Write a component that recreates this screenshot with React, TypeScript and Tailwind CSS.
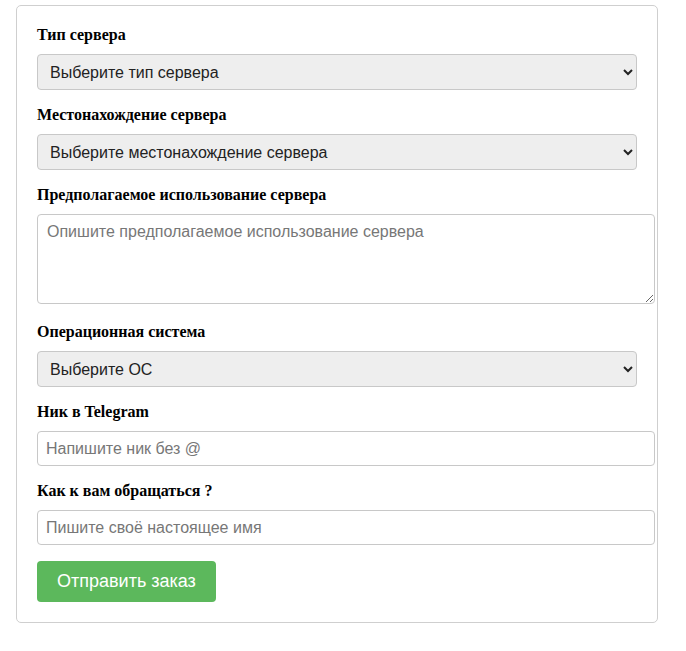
import React from "react";

const labelCls =
  "block text-[16px] leading-[20px] font-bold text-black mb-[9px] [font-family:'Liberation_Serif',serif]";
const selectCls =
  "block w-[600px] h-[36px] pl-[8px] pr-[4px] bg-[#eeeeee] border border-[#c8c8c8] rounded-[4px] text-[16px] text-[#222] [font-family:'Liberation_Sans',Arial,sans-serif]";
const inputCls =
  "block w-[618px] h-[35px] px-[8px] bg-white border border-[#c8c8c8] rounded-[4px] text-[16px] text-[#222] placeholder:text-[#777] [font-family:'Liberation_Sans',Arial,sans-serif] outline-none";

export default function App() {
  return (
    <div className="w-[686px] h-[651px] bg-white pt-[5px] pl-[16px]">
      <div className="w-[642px] border border-[#cfcfcf] rounded-[5px] pt-[19px] pb-[20px] pl-[20px] pr-[20px]">
        <div className="mb-[15px]">
          <label className={labelCls}>Тип сервера</label>
          <select className={selectCls} defaultValue="">
            <option value="">Выберите тип сервера</option>
          </select>
        </div>
        <div className="mb-[15px]">
          <label className={labelCls}>Местонахождение сервера</label>
          <select className={selectCls} defaultValue="">
            <option value="">Выберите местонахождение сервера</option>
          </select>
        </div>
        <div className="mb-[18px]">
          <label className={labelCls}>Предполагаемое использование сервера</label>
          <textarea
            className="block w-[618px] h-[90px] px-[9px] py-[7px] bg-white border border-[#c8c8c8] rounded-[4px] text-[16px] leading-[20px] text-[#222] placeholder:text-[#777] [font-family:'Liberation_Sans',Arial,sans-serif] outline-none resize-y"
            placeholder="Опишите предполагаемое использование сервера"
          />
        </div>
        <div className="mb-[15px]">
          <label className={labelCls}>Операционная система</label>
          <select className={selectCls} defaultValue="">
            <option value="">Выберите ОС</option>
          </select>
        </div>
        <div className="mb-[15px]">
          <label className={labelCls}>Ник в Telegram</label>
          <input className={inputCls} placeholder="Напишите ник без @" />
        </div>
        <div className="mb-[16px]">
          <label className={labelCls}>Как к вам обращаться ?</label>
          <input className={inputCls} placeholder="Пишите своё настоящее имя" />
        </div>
        <button className="h-[41px] px-[20px] bg-[#5cb85c] text-white rounded-[4px] text-[18px] [font-family:'Liberation_Sans',Arial,sans-serif]">
          Отправить заказ
        </button>
      </div>
    </div>
  );
}
